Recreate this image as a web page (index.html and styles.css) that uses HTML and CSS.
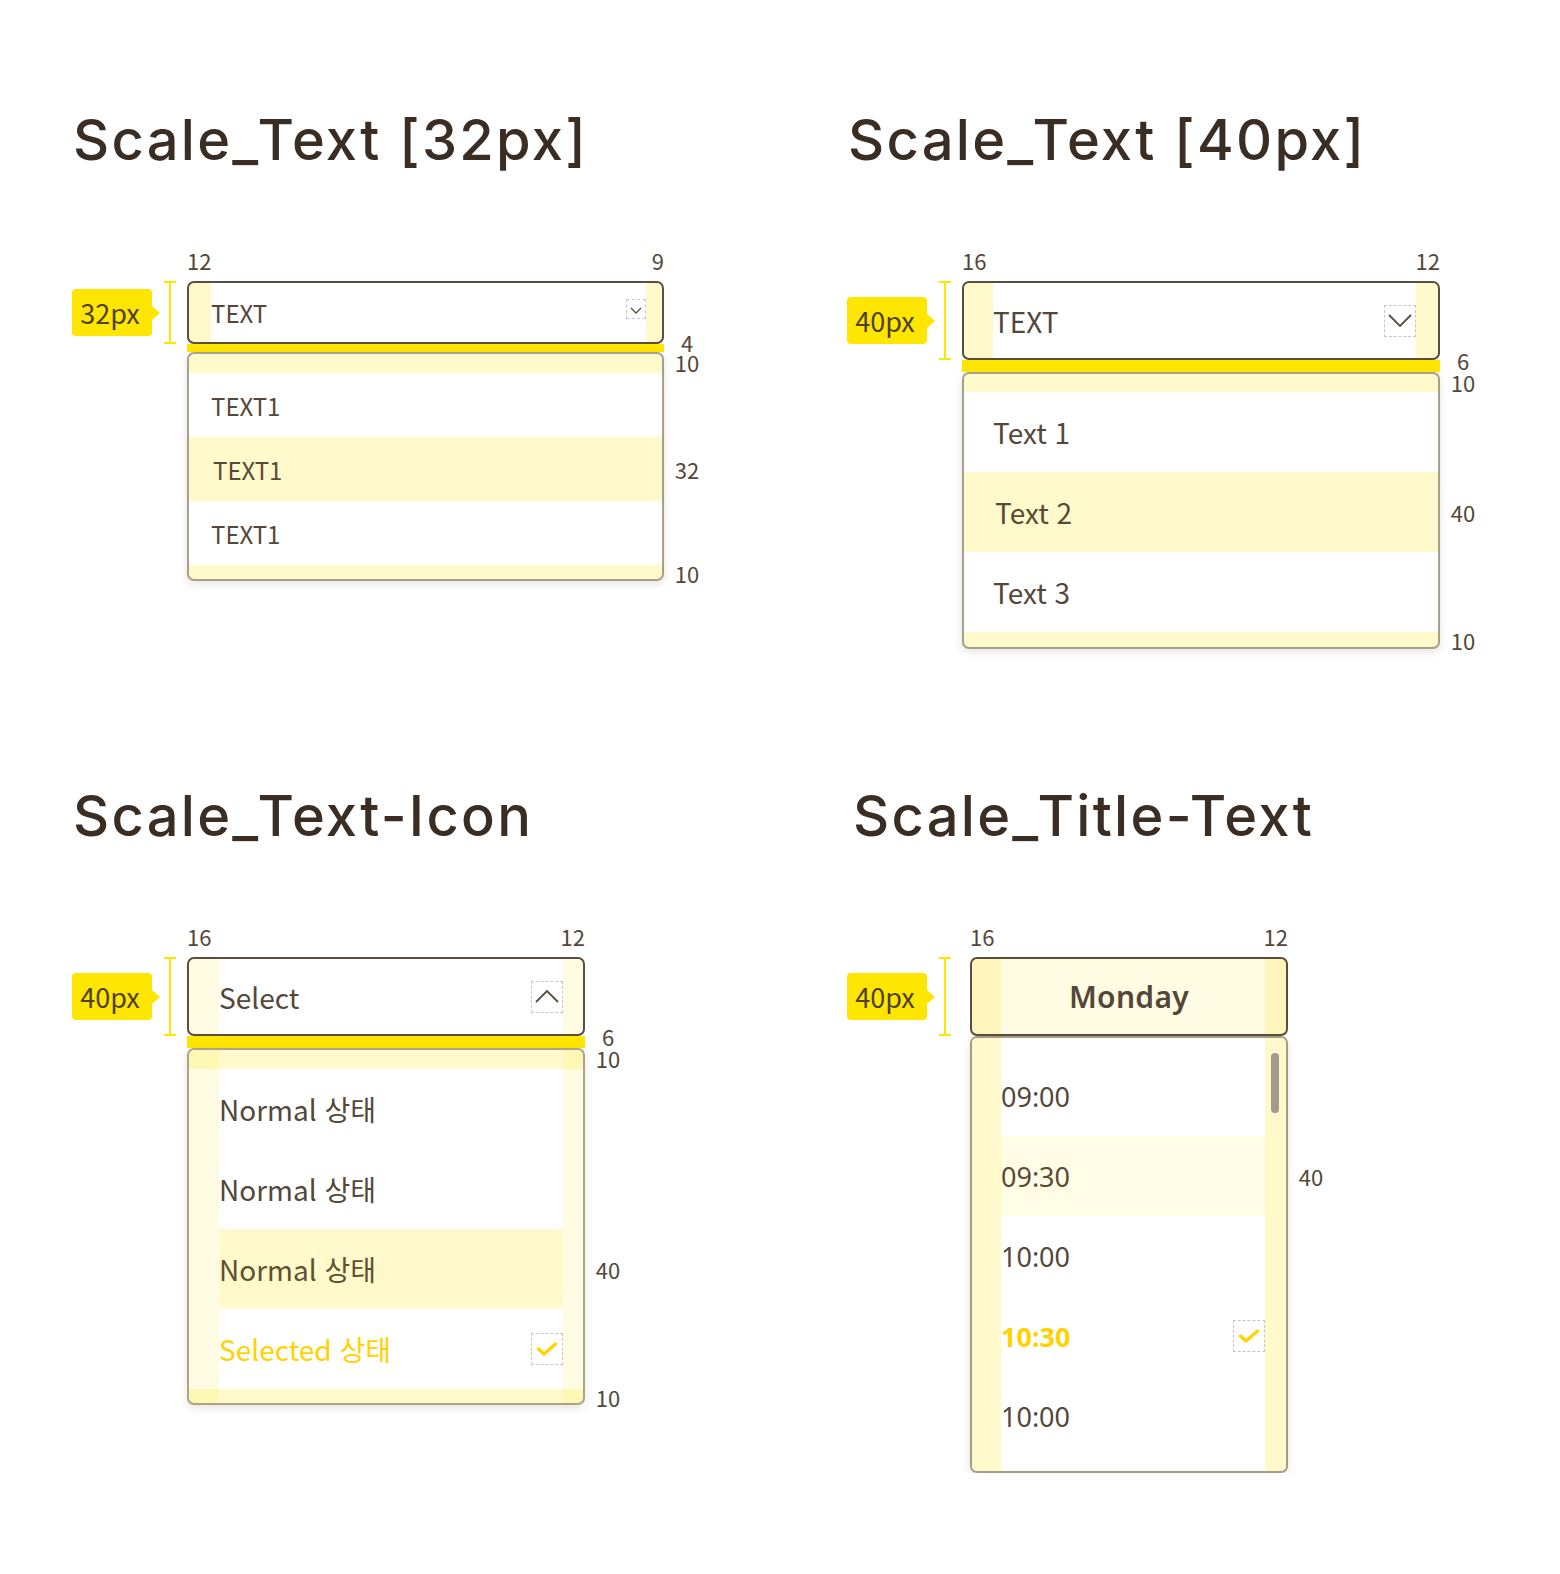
FILE: index.html
```html
<!DOCTYPE html>
<html lang="ko">
<head>
    <meta charset="UTF-8">
    <meta name="viewport" content="width=device-width, initial-scale=1.0">
    <title>Select Scale Guide</title>
    <link rel="stylesheet" href="styles.css">
</head>
<body>
<div class="page">

    <!-- Text 32px -->
    <section class="section">
        <h2 class="title">Scale_Text [32px]</h2>
        <div class="diagram s32">
            <div class="dims"><span>12</span><span>9</span></div>
            <div class="ruler"><span class="badge">32px</span><span class="bracket"></span></div>
            <div class="select">
                <div class="select-body">
                    <span>TEXT</span>
                    <span class="icon-box small">
                        <svg width="18" height="18" viewBox="1 1 18 18"><path d="M5 9l5 5 5-5" fill="none" stroke="#5b4d3f" stroke-width="1.4"/></svg>
                    </span>
                </div>
            </div>
            <div class="bar"></div>
            <div class="note-bar">4</div>
            <div class="list">
                <div class="pad-top"></div>
                <div class="option">TEXT1</div>
                <div class="option hover">TEXT1</div>
                <div class="option">TEXT1</div>
                <div class="pad-bottom"></div>
            </div>
            <div class="notes">
                <span class="n-top">10</span>
                <span class="n-row"></span>
                <span class="n-row">32</span>
                <span class="n-row"></span>
                <span class="n-bottom">10</span>
            </div>
        </div>
    </section>

    <!-- Text 40px -->
    <section class="section">
        <h2 class="title">Scale_Text [40px]</h2>
        <div class="diagram s40">
            <div class="dims"><span>16</span><span>12</span></div>
            <div class="ruler"><span class="badge">40px</span><span class="bracket"></span></div>
            <div class="select">
                <div class="select-body">
                    <span>TEXT</span>
                    <span class="icon-box">
                        <svg width="30" height="30" viewBox="1 1 30 30"><path d="M5 10l11 11 11-11" fill="none" stroke="#5b4d3f" stroke-width="1.8"/></svg>
                    </span>
                </div>
            </div>
            <div class="bar"></div>
            <div class="note-bar">6</div>
            <div class="list">
                <div class="pad-top"></div>
                <div class="option">Text 1</div>
                <div class="option hover">Text 2</div>
                <div class="option">Text 3</div>
                <div class="pad-bottom"></div>
            </div>
            <div class="notes">
                <span class="n-top">10</span>
                <span class="n-row"></span>
                <span class="n-row">40</span>
                <span class="n-row"></span>
                <span class="n-bottom">10</span>
            </div>
        </div>
    </section>

    <!-- Text + Icon -->
    <section class="section">
        <h2 class="title">Scale_Text-Icon</h2>
        <div class="diagram s40 with-icon">
            <div class="dims"><span>16</span><span>12</span></div>
            <div class="ruler"><span class="badge">40px</span><span class="bracket"></span></div>
            <div class="select">
                <div class="select-body">
                    <span>Select</span>
                    <span class="icon-box">
                        <svg width="30" height="30" viewBox="1 1 30 30"><path d="M5 21l11-11 11 11" fill="none" stroke="#5b4d3f" stroke-width="1.8"/></svg>
                    </span>
                </div>
            </div>
            <div class="bar"></div>
            <div class="note-bar">6</div>
            <div class="list">
                <div class="pad-top"></div>
                <div class="option">Normal 상태</div>
                <div class="option">Normal 상태</div>
                <div class="option hover">Normal 상태</div>
                <div class="option selected">
                    <span>Selected 상태</span>
                    <span class="icon-box">
                        <svg width="30" height="30" viewBox="1 1 30 30"><path d="M7.5 16l5.5 5 11.5-10" fill="none" stroke="#ffd400" stroke-width="3.4" stroke-linecap="round" stroke-linejoin="round"/></svg>
                    </span>
                </div>
                <div class="pad-bottom"></div>
            </div>
            <div class="notes">
                <span class="n-top">10</span>
                <span class="n-row"></span>
                <span class="n-row"></span>
                <span class="n-row">40</span>
                <span class="n-row"></span>
                <span class="n-bottom">10</span>
            </div>
        </div>
    </section>

    <!-- Title + Text -->
    <section class="section">
        <h2 class="title shifted">Scale_Title-Text</h2>
        <div class="diagram s40 with-title">
            <div class="dims"><span>16</span><span>12</span></div>
            <div class="ruler"><span class="badge">40px</span><span class="bracket"></span></div>
            <div class="title-box">
                <div class="title-body">Monday</div>
            </div>
            <div class="list time-list">
                <div class="stripe"></div>
                <div class="times">
                    <div class="option">09:00</div>
                    <div class="option hover">09:30</div>
                    <div class="option">10:00</div>
                    <div class="option selected">
                        <span>10:30</span>
                        <span class="icon-box">
                            <svg width="30" height="30" viewBox="1 1 30 30"><path d="M7.5 16l5.5 5 11.5-10" fill="none" stroke="#ffd400" stroke-width="3.4" stroke-linecap="round" stroke-linejoin="round"/></svg>
                        </span>
                    </div>
                    <div class="option">10:00</div>
                </div>
                <div class="stripe stripe-right"><span class="thumb"></span></div>
            </div>
            <div class="notes">
                <span class="n-top"></span>
                <span class="n-row"></span>
                <span class="n-row">40</span>
            </div>
        </div>
    </section>

</div>
</body>
</html>
```

FILE: styles.css
```css
body {
    margin: 0;
    background-color: #ffffff;
    font-family: "Noto Sans CJK KR", "Noto Sans", sans-serif;
    color: #54473a;
}
.page {
    display: grid;
    grid-template-columns: 775px 775px;
    grid-auto-rows: minmax(676px, auto);
    padding: 108px 0 0 72px;
}
.section {
    display: flex;
    flex-direction: column;
    align-items: flex-start;
}
.title {
    margin: 0 0 0 1px;
    font-family: "Inter", "Noto Sans", sans-serif;
    font-weight: 500;
    font-size: 56px;
    line-height: 64px;
    letter-spacing: 2.3px;
    color: #3a2e24;
}
.title.shifted {
    margin-left: 6px;
}

/* diagram grid */
.diagram {
    --side: #fff9cc;
    --w: 477px;
    --sel-h: 63px;
    --bar-h: 8px;
    --row-h: 64px;
    --pad-t: 19px;
    --pad-b: 14px;
    --pl: 22px;
    --pr: 16px;
    --fs: 24px;
    flex-shrink: 0;
    display: grid;
    grid-template-columns: 115px var(--w) 37px;
    grid-template-areas:
        ". dims ."
        "ruler select ."
        ". bar nbar"
        ". list notes";
    margin-top: 76px;
}
.s40 {
    --w: 478px;
    --sel-h: 79px;
    --bar-h: 12px;
    --row-h: 80px;
    --pad-t: 18px;
    --pad-b: 15px;
    --pl: 29px;
    --pr: 22px;
    --fs: 28px;
}
.with-icon {
    --side: #fffce3;
    --w: 398px;
    --pl: 30px;
    --pr: 20px;
    --pad-t: 19px;
    --pad-b: 14px;
}
.with-title {
    --w: 318px;
    --pl: 29px;
    --pr: 21px;
    grid-template-columns: 123px var(--w) 37px;
    grid-template-areas:
        ". dims ."
        "ruler select ."
        ". list notes";
}

.dims {
    grid-area: dims;
    display: flex;
    justify-content: space-between;
    font-size: 22px;
    line-height: 24px;
    margin-bottom: 9px;
}

/* left ruler */
.ruler {
    grid-area: ruler;
    display: flex;
    align-items: center;
}
.badge {
    position: relative;
    width: 80px;
    height: 47px;
    background-color: #ffe600;
    border-radius: 4px;
    display: flex;
    align-items: center;
    justify-content: center;
    font-size: 27px;
    color: #4d4030;
    padding-right: 4px;
    box-sizing: border-box;
}
.badge::after {
    content: "";
    position: absolute;
    left: 100%;
    top: 50%;
    margin-top: -7px;
    border-left: 8px solid #ffe600;
    border-top: 7px solid transparent;
    border-bottom: 7px solid transparent;
}
.bracket {
    align-self: stretch;
    width: 12px;
    margin-left: 12px;
    box-sizing: border-box;
    border-top: 2px solid #ffe600;
    border-bottom: 2px solid #ffe600;
    background: linear-gradient(#ffe600, #ffe600) center / 2px 100% no-repeat;
}

/* select box */
.select, .title-box {
    grid-area: select;
    height: var(--sel-h);
    box-sizing: border-box;
    border: 2px solid #5b4d3f;
    border-radius: 7px;
    background-color: var(--side);
    padding: 0 var(--pr) 0 var(--pl);
    display: flex;
    overflow: hidden;
}
.select-body {
    flex: 1;
    background-color: #ffffff;
    display: flex;
    align-items: center;
    justify-content: space-between;
    font-size: var(--fs);
}
.icon-box {
    width: 32px;
    height: 32px;
    box-sizing: border-box;
    border: 1px dashed #c6c6c6;
    display: flex;
}
.icon-box.small {
    width: 20px;
    height: 20px;
    margin-bottom: 7px;
}
.title-box {
    background-color: #fff6bd;
}
.title-body {
    flex: 1;
    background-color: #fffce3;
    display: flex;
    align-items: center;
    justify-content: center;
    padding-right: 8px;
    font-family: "Noto Sans", sans-serif;
    font-weight: 600;
    font-size: 30px;
    letter-spacing: 0.3px;
    color: #54473a;
}

.bar {
    grid-area: bar;
    height: var(--bar-h);
    background-color: #ffe600;
}

/* dropdown list */
.list {
    grid-area: list;
    box-sizing: border-box;
    border: 2px solid #a9a08b;
    border-radius: 7px;
    background-color: #ffffff;
    box-shadow: 0 3px 8px rgba(60, 50, 30, 0.13);
    overflow: hidden;
}
.pad-top {
    height: var(--pad-t);
    background-color: rgba(255, 230, 0, 0.2);
}
.pad-bottom {
    height: var(--pad-b);
    background-color: rgba(255, 230, 0, 0.2);
}
.option {
    height: var(--row-h);
    display: flex;
    align-items: center;
    justify-content: space-between;
    padding: 0 var(--pr) 0 var(--pl);
    font-size: var(--fs);
}
.option.hover {
    background-color: #fff9cc;
    padding-left: calc(var(--pl) + 2px);
    color: #584a34;
}
.with-icon .list {
    border-color: #aea383;
    background: linear-gradient(to right, #fffce3 var(--pl), #ffffff var(--pl), #ffffff calc(100% - var(--pr)), #fffce3 calc(100% - var(--pr)));
}
.with-icon .option {
    margin: 0 var(--pr) 0 var(--pl);
    padding: 0;
}
.with-icon .option.hover {
    padding: 0;
    color: #5e5030;
}
.option.selected {
    color: #ffd200;
}

/* time list */
.time-list {
    display: flex;
    border-color: #a69c86;
}
.stripe {
    width: var(--pl);
    background-color: #fff9cb;
}
.stripe-right {
    width: var(--pr);
}
.thumb {
    display: block;
    width: 8px;
    height: 60px;
    margin: 15px 0 0 6px;
    border-radius: 4px;
    background-color: #a39a8c;
}
.times {
    flex: 1;
    padding: 18px 0 15px;
}
.times .option {
    padding: 0;
    font-family: "Noto Sans", sans-serif;
    font-size: 27px;
}
.times .option.hover {
    background-color: #fffde6;
    padding: 0;
}
.times .option.selected {
    font-weight: 700;
}

/* right notes */
.note-bar {
    grid-area: nbar;
    height: var(--bar-h);
    line-height: var(--bar-h);
    padding-left: 9px;
    width: 28px;
    text-align: center;
    font-size: 22px;
    transform: translateY(-6px);
}
.notes {
    grid-area: notes;
    display: flex;
    flex-direction: column;
    padding-left: 9px;
    width: 28px;
    text-align: center;
    font-size: 22px;
}
.n-top {
    height: calc(var(--pad-t) + 2px);
    line-height: calc(var(--pad-t) + 2px);
}
.n-row {
    height: var(--row-h);
    line-height: var(--row-h);
}
.n-bottom {
    height: calc(var(--pad-b) + 2px);
    line-height: calc(var(--pad-b) + 2px);
}
```
